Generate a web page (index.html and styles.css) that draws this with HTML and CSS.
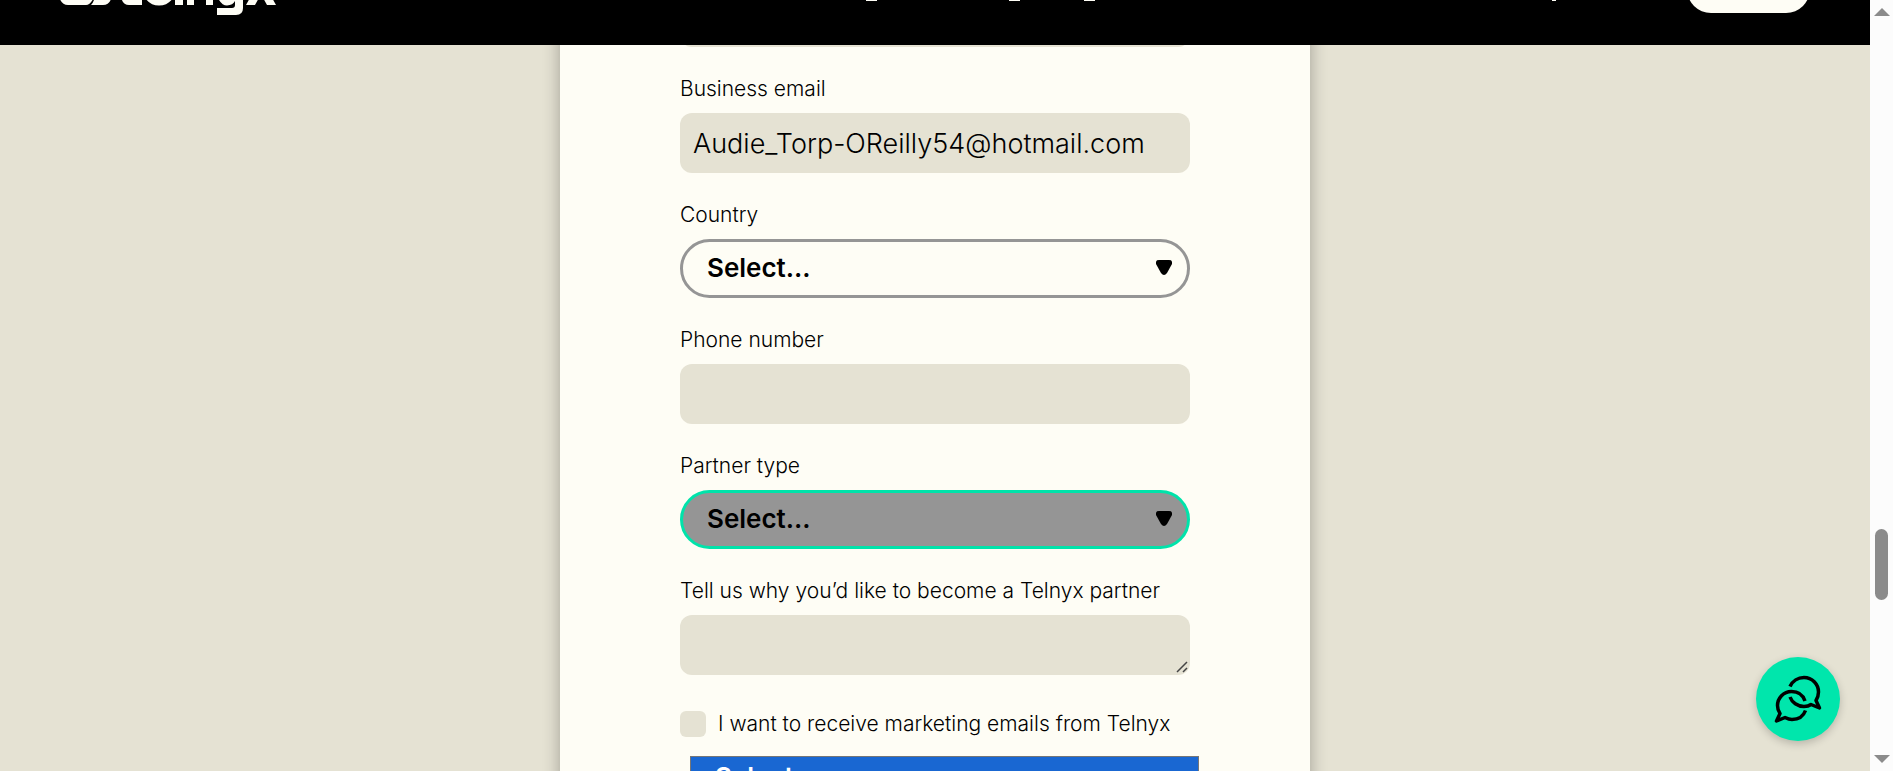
FILE: index.html
```html
<!DOCTYPE html>
<html lang="en">
<head>
<meta charset="utf-8">
<meta name="viewport" content="width=device-width, initial-scale=1">
<title>Telnyx partner form</title>
<link rel="stylesheet" href="styles.css">
</head>
<body>
<div class="window">
  <div class="page">
    <header class="header">
      <a class="logo" href="#" aria-label="Telnyx">
        <svg width="218" height="52" viewBox="60 -37 218 52" fill="currentColor" aria-hidden="true">
          <path d="M59-4Q61 5 68 5H86Q90 5 93-1V-4Z"/>
          <path d="M95-4Q94 2 91 5H103Q109 5 111-1V-4Z"/>
          <path d="M121-4Q122 5 129 5H142V-4Z"/>
          <path d="M144-4Q149 5.500 159 5.500Q168 5.500 173-2V-4Z"/>
          <path d="M175-4H183V5H175ZM187-4H194V5H187ZM206-4H213V5H206Z"/>
          <path d="M217-4Q221 5.500 227 5.500Q233 5 235 1V5Q235 8 232 8H217V15H236Q243 15 243 8V-4Z"/>
          <path d="M251-4H260L255 5H246ZM262-4H271L276 5H267Z"/>
        </svg>
      </a>
      <svg class="nav-marks" height="24" aria-hidden="true" fill="currentColor">
        <rect x="588" y="23" width="11" height="1"/>
        <rect x="731" y="23" width="11" height="1"/>
        <rect x="806" y="23" width="11" height="1"/>
        <rect x="1274" y="23" width="4" height="1"/>
      </svg>
      <a class="signup" href="#" aria-label="Sign up"></a>
    </header>
    <main class="main">
      <form class="card">
        <input class="input" type="text" aria-label="Name">
        <div class="field">
          <label class="label" for="email">Business email</label>
          <input class="input" id="email" type="email" value="Audie_Torp-OReilly54@hotmail.com">
        </div>
        <div class="field">
          <label class="label" for="country">Country</label>
          <div class="control">
            <select class="select" id="country"><option>Select...</option></select>
            <svg class="arrow" width="16" height="15" viewBox="0 0 16 15" aria-hidden="true"><path d="M3 0H13Q17 0 16 4L11 13Q8 17 5 13L0 4Q-1 0 3 0Z"/></svg>
          </div>
        </div>
        <div class="field">
          <label class="label" for="phone">Phone number</label>
          <input class="input" id="phone" type="tel">
        </div>
        <div class="field">
          <label class="label" for="partner">Partner type</label>
          <div class="control">
            <select class="select select-open" id="partner"><option>Select...</option></select>
            <svg class="arrow" width="16" height="15" viewBox="0 0 16 15" aria-hidden="true"><path d="M3 0H13Q17 0 16 4L11 13Q8 17 5 13L0 4Q-1 0 3 0Z"/></svg>
          </div>
        </div>
        <div class="field">
          <label class="label" for="why">Tell us why you’d like to become a Telnyx partner</label>
          <div class="control">
            <textarea class="input textarea" id="why"></textarea>
            <svg class="grip" width="12" height="12" viewBox="0 0 12 12" fill="none" stroke="#444" stroke-width="1.500" aria-hidden="true"><path d="M1 11L11 1M7 11L11 7"/></svg>
          </div>
        </div>
        <div class="consent">
          <input class="checkbox" id="marketing" type="checkbox">
          <label class="label" for="marketing">I want to receive marketing emails from Telnyx</label>
          <div class="menu" role="listbox" aria-label="Partner type">
            <div class="option" role="option" aria-selected="true">Select...</div>
          </div>
        </div>
      </form>
    </main>
    <button class="chat" type="button" aria-label="Open chat">
      <svg width="48" height="48" viewBox="0 0 48 48" fill="none" stroke="currentColor" stroke-width="3.500" stroke-linejoin="round" aria-hidden="true">
        <path d="M16 11.500C18.500 6 24 2.500 30 2.500C38 2.500 44.500 9 44.500 17C44.500 20 43.500 23 42 25.500L45.500 33L37 29.500C35 31 32.500 31.500 30 31.500C23.500 31.500 18 27.500 16 22"/>
        <path d="M31 26C29 20 24 16.500 17.500 16.500C9.500 16.500 3.500 23 3.500 30.500C3.500 33.500 4.500 36.500 6 38.500L2.500 46L11 42.500C13 43.500 15.500 44.500 18 44.500C24.500 44.500 29.500 41 31.500 35.500"/>
      </svg>
    </button>
  </div>
  <div class="scrollbar" aria-hidden="true">
    <svg width="16" height="8" viewBox="0 0 16 8"><path d="M0 8L8 0L16 8Z"/></svg>
    <div class="track"><div class="thumb"></div></div>
    <svg width="16" height="8" viewBox="0 0 16 8"><path d="M0 0L8 8L16 0Z"/></svg>
  </div>
</div>
</body>
</html>
```
FILE: styles.css
```css
* { box-sizing: border-box; }

body {
  margin: 0;
  color: #000;
  font-family: Inter, "Liberation Sans", sans-serif;
  font-size: 21px;
  font-weight: 300;
}

.window {
  display: flex;
  height: 100vh;
  overflow: hidden;
}

.page {
  position: relative;
  display: flex;
  flex: 1;
  flex-direction: column;
  overflow: hidden;
  background: #e5e2d3;
}

.header {
  position: relative;
  z-index: 1;
  display: flex;
  flex: none;
  align-items: center;
  height: 112px;
  margin-top: -67px;
  padding: 0 60px;
  background: #000;
  color: #fefdf5;
}

.logo { display: flex; color: inherit; }
.nav-marks { flex: 1; }

.signup {
  width: 123px;
  height: 48px;
  border-radius: 24px;
  background: #fefdf5;
}

.main {
  display: flex;
  flex: none;
  justify-content: center;
  margin-top: -58px;
}

.card {
  display: flex;
  flex-direction: column;
  gap: 26px;
  width: 750px;
  max-width: 100%;
  padding: 0 120px 120px;
  background: #fefdf5;
  box-shadow: 0 0 16px rgba(0, 0, 0, 0.3);
}

.field {
  display: flex;
  flex-direction: column;
  gap: 8px;
}

.label { line-height: 32px; }

.input {
  display: block;
  width: 100%;
  height: 60px;
  padding: 0 13px;
  border: 0;
  border-radius: 12px;
  outline: 0;
  background: #e5e2d3;
  color: inherit;
  font: inherit;
  font-size: 27px;
}

.textarea { resize: vertical; }
.textarea::-webkit-resizer { display: none; }

.grip {
  position: absolute;
  right: 2px;
  bottom: 2px;
  pointer-events: none;
}

.control {
  position: relative;
  display: flex;
}

.select {
  width: 100%;
  height: 59px;
  padding: 0 24px 2px;
  appearance: none;
  border: 3px solid #959595;
  border-radius: 30px;
  outline: 0;
  background: #fefdf5;
  color: #000;
  font: inherit;
  font-size: 26px;
  font-weight: 600;
}

.select-open {
  border-color: #00e3aa;
  background: #959595;
}

.arrow {
  position: absolute;
  top: 21px;
  right: 18px;
  pointer-events: none;
}

.consent {
  position: relative;
  display: flex;
  align-items: center;
  gap: 12px;
  padding-top: 7px;
}

.checkbox {
  width: 26px;
  height: 26px;
  margin: 0;
  appearance: none;
  border-radius: 6px;
  background: #e5e2d3;
}

.menu {
  position: absolute;
  top: 55px;
  right: -9px;
  left: 10px;
  border: 1px solid #767676;
  background: #fefdf5;
}

.option {
  padding: 0 24px;
  background: #1967d2;
  color: #fff;
  font-size: 26px;
  font-weight: 600;
  line-height: 40px;
}

.chat {
  position: absolute;
  right: 30px;
  bottom: 30px;
  display: flex;
  align-items: center;
  justify-content: center;
  width: 84px;
  height: 84px;
  padding: 0;
  border: 0;
  border-radius: 50%;
  background: #00e6ac;
  box-shadow: 0 3px 8px rgba(0, 0, 0, 0.2);
  color: #000;
}

.scrollbar {
  display: flex;
  flex: none;
  flex-direction: column;
  align-items: center;
  width: 23px;
  padding: 8px 0;
  background: #fcfcfc;
  fill: #8b8b8b;
}

.track {
  display: flex;
  flex: 1;
  flex-direction: column;
  padding-top: 513px;
}

.thumb {
  width: 13px;
  height: 71px;
  border-radius: 7px;
  background: #8b8b8b;
}
```
